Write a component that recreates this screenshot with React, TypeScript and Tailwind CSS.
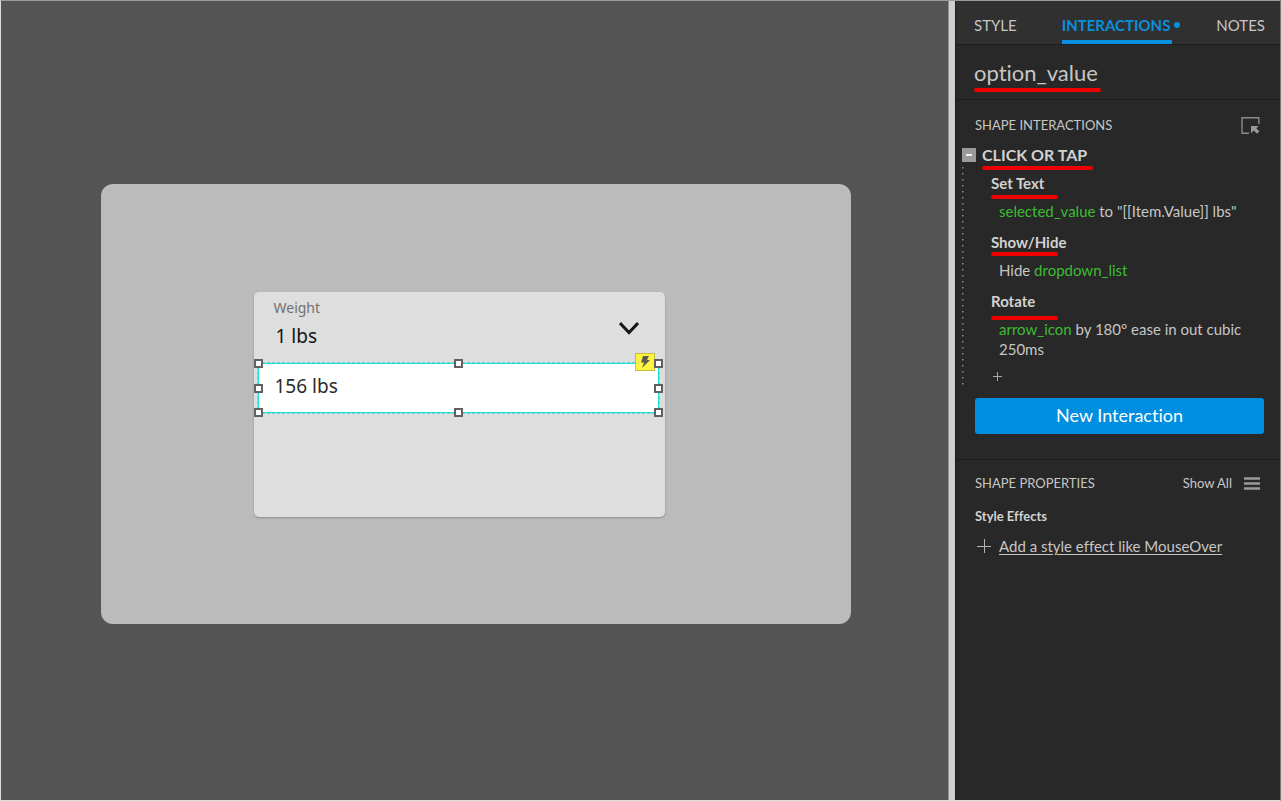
import type { ReactNode } from "react";

function Marker({ className }: { className: string }) {
  return <span aria-hidden="true" className={`absolute h-1 rounded-full bg-[#ee0000] ${className}`} />;
}

function Handle({ className }: { className: string }) {
  return (
    <span
      aria-hidden="true"
      className={`absolute size-[9px] border-2 border-[#606060] bg-white ${className}`}
    />
  );
}

function Action({ title, marker, children }: { title: string; marker: string; children: ReactNode }) {
  return (
    <section className="mb-[11px]">
      <h4 className="relative h-7 text-[15px] leading-5 font-bold text-[#d2d2d2]">
        {title}
        <Marker className={marker} />
      </h4>
      <p className="pl-2 text-[15px] leading-5">{children}</p>
    </section>
  );
}

function Target({ children }: { children: ReactNode }) {
  return <span className="text-[#3dbb33]">{children}</span>;
}

function Canvas() {
  return (
    <main className="flex flex-1 items-center justify-center bg-[#555555] pt-[7px] pl-0.5">
      <div className="h-[440px] w-[750px] rounded-xl bg-[#bbbbbb] pt-[108px] pl-[153px] font-['Noto_Sans',sans-serif]">
        <div className="h-[225px] w-[411px] rounded-[5px] bg-[#dedede] shadow-[0_1px_2px_rgba(0,0,0,0.25)]">
          <button
            type="button"
            aria-label="Weight"
            className="flex h-[71px] w-full items-start justify-between pt-1 pr-[26px] pl-5 text-left"
          >
            <span className="flex flex-col">
              <span className="text-[14px] leading-6 text-[#707070]">Weight</span>
              <span className="pl-0.5 text-[19px] leading-8 text-[#151515]">1 lbs</span>
            </span>
            <svg className="mt-[25px] h-3.5 w-5" viewBox="0 0 20 14" fill="none" stroke="#171717" strokeWidth="3">
              <path d="M1 2 10 11.5 19 2" />
            </svg>
          </button>
          <div className="relative mr-1.5 ml-1 h-[50px] border border-[#19e0dc] bg-white outline-1 outline-dashed outline-[#62d6d3]">
            <button
              type="button"
              className="flex h-full w-full items-center pb-1 pl-4 text-left text-[19px] leading-8 text-[#2b2b2b]"
            >
              156 lbs
            </button>
            <span className="absolute -top-[11px] right-[3px] flex h-[18px] w-5 items-center justify-center border border-[#c5bd42] bg-[#fdf542]">
              <svg className="h-3 w-2.5" viewBox="0 0 10 12" fill="#5d5a50">
                <path d="M3 0H9L7 4H10L2 12 4 6.5H1Z" />
              </svg>
            </span>
            <Handle className="-top-[5px] -left-[5px]" />
            <Handle className="-top-[5px] left-1/2 -ml-1" />
            <Handle className="-top-[5px] -right-[5px]" />
            <Handle className="top-1/2 -left-[5px] -mt-1" />
            <Handle className="top-1/2 -right-[5px] -mt-1" />
            <Handle className="-bottom-[5px] -left-[5px]" />
            <Handle className="-bottom-[5px] left-1/2 -ml-1" />
            <Handle className="-right-[5px] -bottom-[5px]" />
          </div>
        </div>
      </div>
    </main>
  );
}

function Tabs() {
  return (
    <nav className="flex h-[44px] items-stretch border-b border-[#1e1e1e] bg-[#303030] pr-[15px] pl-[18px] text-[15px]">
      <button type="button" className="pt-1.5">STYLE</button>
      <button type="button" className="relative ml-[45px] pt-1.5 pr-2.5 font-bold text-[#088fdf]">
        INTERACTIONS
        <span className="absolute top-[21px] right-0 size-1.5 rounded-full bg-[#088fdf]" />
        <span className="absolute right-2 bottom-0 left-0 h-1 bg-[#088fdf]" />
      </button>
      <button type="button" className="ml-auto pt-1.5">NOTES</button>
    </nav>
  );
}

export default function App() {
  return (
    <div className="flex min-h-screen border border-t-[#979b99] border-r-[#777777] border-b-[#dddddd] border-l-[#dddddd] bg-[#282828] font-[Lato,sans-serif] text-[#c6c6c6] [font-variant-ligatures:none]">
      <Canvas />
      <div className="w-[7px] border-l border-[#929292] bg-[#cfcfcf]" />
      <aside className="w-[325px] border-l border-[#1b1f20] bg-[#282828]">
        <Tabs />
        <header className="h-[55px] border-b border-[#1e1e1e] pt-3 pl-[18px]">
          <h2 className="relative text-[22px] leading-8">
            option_value
            <Marker className="top-[31px] left-0 w-[127px]" />
          </h2>
        </header>
        <section className="h-[360px] border-b border-[#1e1e1e] pr-4 pl-[19px]">
          <div className="flex h-11 items-center justify-between pt-1.5">
            <h3 className="text-[13px] leading-5">SHAPE INTERACTIONS</h3>
            <button type="button" aria-label="Select target" className="pr-1">
              <svg className="size-[19px]" viewBox="0 0 19 19" fill="none" stroke="#8c8c8c">
                <path d="M8 17.2H1V1.8H17.8V8" strokeWidth="1.4" />
                <path d="M10 10H17.5L15.3 12.2 18.4 15.4 16 17.8 12.8 14.6 10 17.2Z" fill="#999999" stroke="none" />
              </svg>
            </button>
          </div>
          <div className="-ml-[13px] flex h-[22px] items-center gap-1.5">
            <button type="button" aria-label="Collapse" className="flex size-3.5 items-center justify-center bg-[#9a9a9a]">
              <span className="h-0.5 w-1.5 bg-[#eeeeee]" />
            </button>
            <h3 className="relative text-[16px] leading-[22px] font-bold text-[#d2d2d2]">
              CLICK OR TAP
              <Marker className="top-[22px] left-0 w-[111px]" />
            </h3>
          </div>
          <div className="-ml-[13px] flex h-[223px]">
            <svg className="h-full w-[3px] shrink-0" fill="#858585">
              <defs>
                <pattern id="dots" width="3" height="6" patternUnits="userSpaceOnUse">
                  <rect y="1" width="1.5" height="1.5" />
                </pattern>
              </defs>
              <rect width="3" height="223" fill="url(#dots)" />
            </svg>
            <div className="pt-[7px] pl-[26px]">
              <Action title="Set Text" marker="top-[22px] left-0 w-[67px]">
                <Target>selected_value</Target> to "[[Item.Value]] lbs"
              </Action>
              <Action title="Show/Hide" marker="top-5 left-0 w-[67px]">
                Hide <Target>dropdown_list</Target>
              </Action>
              <Action title="Rotate" marker="top-[25px] left-0 w-[67px]">
                <Target>arrow_icon</Target> by 180° ease in out cubic
                <span className="block">250ms</span>
              </Action>
              <button type="button" aria-label="Add action" className="block pt-0.5 pl-0.5">
                <svg className="size-[9px]" viewBox="0 0 9 9" stroke="#aaaaaa">
                  <path d="M0 4.5H9M4.5 0V9" />
                </svg>
              </button>
            </div>
          </div>
          <button
            type="button"
            className="mt-[9px] h-9 w-full rounded-[3px] bg-[#008ee0] pb-0.5 text-[18px] leading-6 text-white"
          >
            New Interaction
          </button>
        </section>
        <section className="pt-[13px] pr-5 pl-[19px]">
          <div className="flex items-center justify-between">
            <h3 className="text-[13px] leading-5">SHAPE PROPERTIES</h3>
            <button type="button" className="flex items-center gap-3 text-[13px] leading-5">
              Show All
              <svg className="h-[13px] w-4" viewBox="0 0 16 13" stroke="#999999" strokeWidth="2.6">
                <path d="M0 1.5H16M0 6.5H16M0 11.5H16" />
              </svg>
            </button>
          </div>
          <h4 className="mt-[13px] text-[13px] leading-5 font-bold text-[#d2d2d2]">Style Effects</h4>
          <div className="mt-[9px] flex items-center gap-2 pl-0.5">
            <svg className="size-3.5" viewBox="0 0 14 14" stroke="#b5b5b5">
              <path d="M0 7.5H14M7.5 0V14" />
            </svg>
            <a href="#" className="text-[15px] leading-[22px] underline underline-offset-2">
              Add a style effect like MouseOver
            </a>
          </div>
        </section>
      </aside>
    </div>
  );
}
